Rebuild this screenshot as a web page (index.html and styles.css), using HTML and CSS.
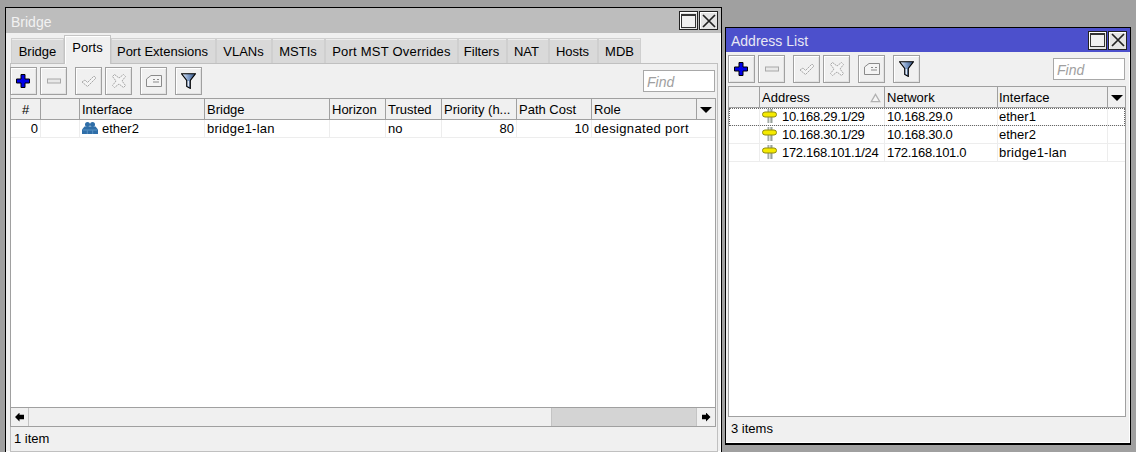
FILE: index.html
```html
<!DOCTYPE html>
<html lang="en">
<head>
<meta charset="utf-8">
<title>Bridge and Address List</title>
<link rel="stylesheet" href="styles.css">
</head>
<body>
<svg class="sprite" aria-hidden="true">
  <symbol id="i-plus" viewBox="0 0 14 14"><path d="M5 .5h4v4.500h4.500v4H9v4.500H5V9H.5V5H5z" fill="#0000e6" stroke="#000" stroke-width="1"/></symbol>
  <symbol id="i-minus" viewBox="0 0 16 16"><rect x="1.500" y="6" width="13" height="4" fill="#e8e8e8" stroke="#a8a8a8"/></symbol>
  <symbol id="i-check" viewBox="0 0 16 16"><path d="M1 9l3-2 2.500 2.500L13 3l2 2-8.500 8.500z" fill="#f4f4f4" stroke="#a8a8a8" stroke-dasharray="2 .6"/></symbol>
  <symbol id="i-x" viewBox="0 0 16 16"><path d="M3.500 1.500L8 5l4.500-3.500 2 2L11 8l3.500 4.500-2 2L8 11l-4.500 3.500-2-2L5 8 1.500 3.500z" fill="#f4f4f4" stroke="#a8a8a8" stroke-dasharray="2 .6"/></symbol>
  <symbol id="i-note" viewBox="0 0 16 16"><path d="M.5 6L5 2.500h10.500v11H.5z" fill="#f4f4f4" stroke="#8a8a8a"/><path d="M7 6.500h2M11 6.500h2M7 9h6" stroke="#8a8a8a"/></symbol>
  <symbol id="i-filter" viewBox="0 0 15 16"><defs><linearGradient id="g-f" x1="0" x2="1" y1="0" y2="0"><stop offset="0" stop-color="#e8eef8"/><stop offset=".5" stop-color="#7e9cc8"/><stop offset="1" stop-color="#33517f"/></linearGradient></defs><path d="M.6 .8h13.800L9.300 7.500V15.400L5.700 13.500V7.500z" fill="url(#g-f)" stroke="#000" stroke-width="1.100"/><path d="M6.800 8v5l1 .6V8z" fill="#fff"/></symbol>
  <symbol id="i-if" viewBox="0 0 16 12"><g fill="#2f6ea8"><circle cx="5.500" cy="2.600" r="2.500"/><circle cx="10.500" cy="2.600" r="2.500"/><path d="M2.500 4.500h11l2.500 3v4.500H0V7.500z"/></g><path d="M1 8h14M5.300 8.500v3.500M10.700 8.500v3.500" stroke="#6fa3d0" stroke-width=".7"/></symbol>
  <symbol id="i-addr" viewBox="0 0 15 14"><rect x="5.500" y="0" width="5" height="14" fill="#98a29b"/><rect x="6.800" y="0" width="1.700" height="14" fill="#dde0dd"/><rect x=".5" y="3" width="14" height="5" rx="2.500" fill="#f5ea00" stroke="#8f8a10"/></symbol>
</svg>

<section class="window win-bridge">
  <header class="titlebar inactive">
    <span class="title">Bridge</span>
    <span class="winbtns">
      <span class="winbtn"><span class="maxi"></span></span>
      <span class="winbtn"><svg class="closei" viewBox="0 0 14 14"><path d="M1 1l12 12M13 1L1 13" stroke="#222" stroke-width="1.700"/></svg></span>
    </span>
  </header>
  <nav class="tabs">
    <span class="tab t1">Bridge</span>
    <span class="tab active t2">Ports</span>
    <span class="tab t3">Port Extensions</span>
    <span class="tab t4">VLANs</span>
    <span class="tab t5">MSTIs</span>
    <span class="tab t6">Port MST Overrides</span>
    <span class="tab t7">Filters</span>
    <span class="tab t8">NAT</span>
    <span class="tab t9">Hosts</span>
    <span class="tab t10">MDB</span>
  </nav>
  <div class="panel panel-bridge">
    <div class="toolbar">
      <span class="tbtn"><svg class="ic-plus"><use href="#i-plus"/></svg></span>
      <span class="tbtn"><svg class="ic16"><use href="#i-minus"/></svg></span>
      <span class="tbtn gap"><svg class="ic16"><use href="#i-check"/></svg></span>
      <span class="tbtn"><svg class="ic16"><use href="#i-x"/></svg></span>
      <span class="tbtn gap"><svg class="ic16"><use href="#i-note"/></svg></span>
      <span class="tbtn gap"><svg class="ic-f"><use href="#i-filter"/></svg></span>
      <span class="find">Find</span>
    </div>
    <div class="table">
      <div class="row head cols-bridge">
        <span class="c ctr">#</span><span class="c"></span><span class="c">Interface</span><span class="c">Bridge</span><span class="c">Horizon</span><span class="c">Trusted</span><span class="c">Priority (h...</span><span class="c">Path Cost</span><span class="c">Role</span><span class="c arrow"><i class="down"></i></span>
      </div>
      <div class="row cols-bridge">
        <span class="c num">0</span><span class="c"></span><span class="c icon-cell"><svg class="ic-if"><use href="#i-if"/></svg>ether2</span><span class="c wider">bridge1-lan</span><span class="c"></span><span class="c">no</span><span class="c num">80</span><span class="c num">10</span><span class="c wide">designated port</span>
      </div>
    </div>
    <div class="hscroll">
      <span class="sbtn"><i class="al"></i></span>
      <span class="strack"></span>
      <span class="sthumb"></span>
      <span class="sbtn"><i class="ar"></i></span>
    </div>
    <div class="status">1 item</div>
  </div>
</section>

<section class="window win-addr">
  <header class="titlebar">
    <span class="title">Address List</span>
    <span class="winbtns">
      <span class="winbtn"><span class="maxi"></span></span>
      <span class="winbtn"><svg class="closei" viewBox="0 0 14 14"><path d="M1 1l12 12M13 1L1 13" stroke="#222" stroke-width="1.700"/></svg></span>
    </span>
  </header>
  <div class="panel panel-addr">
    <div class="toolbar">
      <span class="tbtn"><svg class="ic-plus"><use href="#i-plus"/></svg></span>
      <span class="tbtn"><svg class="ic16"><use href="#i-minus"/></svg></span>
      <span class="tbtn gap"><svg class="ic16"><use href="#i-check"/></svg></span>
      <span class="tbtn"><svg class="ic16"><use href="#i-x"/></svg></span>
      <span class="tbtn gap"><svg class="ic16"><use href="#i-note"/></svg></span>
      <span class="tbtn gap"><svg class="ic-f"><use href="#i-filter"/></svg></span>
      <span class="find">Find</span>
    </div>
    <div class="table">
      <div class="row head cols-addr">
        <span class="c"></span><span class="c sorted">Address<svg class="sort" viewBox="0 0 9 8"><path d="M4.500 1L8 7H1z" fill="#f4f4f4" stroke="#b0b0b0"/></svg></span><span class="c">Network</span><span class="c">Interface</span><span class="c arrow"><i class="down"></i></span>
      </div>
      <div class="row cols-addr selected">
        <span class="c"></span><span class="c icon-cell ip"><svg class="ic-addr"><use href="#i-addr"/></svg>10.168.29.1/29</span><span class="c ip">10.168.29.0</span><span class="c">ether1</span><span class="c"></span>
      </div>
      <div class="row cols-addr">
        <span class="c"></span><span class="c icon-cell ip"><svg class="ic-addr"><use href="#i-addr"/></svg>10.168.30.1/29</span><span class="c ip">10.168.30.0</span><span class="c">ether2</span><span class="c"></span>
      </div>
      <div class="row cols-addr">
        <span class="c"></span><span class="c icon-cell ip"><svg class="ic-addr"><use href="#i-addr"/></svg>172.168.101.1/24</span><span class="c ip">172.168.101.0</span><span class="c wider">bridge1-lan</span><span class="c"></span>
      </div>
    </div>
    <div class="status status-addr">3 items</div>
  </div>
</section>
</body>
</html>
```
FILE: styles.css
```css
* { box-sizing: border-box; }
html, body { margin: 0; height: 100%; }
body {
  position: relative;
  width: 1136px;
  height: 452px;
  overflow: hidden;
  background: #a0a0a0;
  font: 13px/1 "Liberation Sans", Arial, sans-serif;
  color: #000;
}
.sprite { position: absolute; width: 0; height: 0; }

.window {
  position: absolute;
  display: flex;
  flex-direction: column;
  background: #f0f0f0;
  border: 1px solid #000;
  box-shadow: inset -1px -1px 0 #fff;
}
.win-bridge { left: 5px; top: 7px; width: 717px; height: 446px; }
.win-addr { left: 725px; top: 27px; width: 406px; height: 418px; border-bottom-width: 2px; }

.titlebar {
  flex: none;
  display: flex;
  align-items: center;
  justify-content: space-between;
  height: 24px;
  padding: 0 3px 0 5px;
  background: #4c50cc;
  color: #e8e8f4;
  font-size: 14px;
}
.titlebar.inactive { height: 25px; background: #bdbdbd; color: #f2f2f2; }
.title { padding-top: 2px; }
.winbtns { display: flex; gap: 1px; }
.winbtn {
  display: flex;
  align-items: center;
  justify-content: center;
  width: 19px;
  height: 19px;
  background: #e4e4e4;
  border: 1px solid #222;
  box-shadow: inset 1px 1px 0 #fff;
}
.maxi { width: 15px; height: 14px; border: 1px solid #333; border-top-width: 2px; background: #f0f0f0; }
.closei { width: 14px; height: 14px; }

.tabs { flex: none; display: flex; height: 30px; padding-left: 5px; align-items: flex-end; }
.tab {
  display: flex;
  align-items: center;
  justify-content: center;
  height: 25px;
  padding-top: 1px;
  background: #d9d9d9;
  border: 1px solid #cfcfcf;
  border-bottom: 0;
  box-shadow: inset 0 1px 0 #ececec;
}
.tab.active {
  position: relative;
  height: 29px;
  margin-bottom: -1px;
  padding-bottom: 6px;
  background: #f0f0f0;
  border-color: #c4c4c4;
  box-shadow: inset 1px 1px 0 #fff;
  z-index: 1;
}
.t1 { width: 53px; }
.t2 { width: 47px; }
.t3 { width: 105px; padding-right: 2px; }
.t4 { width: 56px; padding-right: 1px; }
.t5 { width: 53px; padding-right: 1px; }
.t6 { width: 133px; letter-spacing: .22px; }
.t7 { width: 49px; padding-right: 2px; }
.t8 { width: 42px; padding-right: 3px; }
.t9 { width: 49px; padding-right: 2px; }
.t10 { width: 43px; }

.panel { display: flex; flex-direction: column; flex: 1; min-height: 0; }
.panel-bridge {
  margin: 0 3px 0 4px;
  padding: 3px 2px 0 0;
  border-top: 1px solid #c0c0c0;
  border-bottom: 1px solid #c0c0c0;
  box-shadow: inset 1px 0 0 #c0c0c0, inset -1px 0 0 #c0c0c0;
}
.panel-addr { padding: 3px 4px 3px 2px; }

.toolbar { flex: none; display: flex; align-items: center; height: 28px; padding-right: 1px; }
.tbtn {
  display: flex;
  align-items: center;
  justify-content: center;
  width: 27px;
  height: 28px;
  margin-right: 3px;
  background: #f0f0f0;
  border: 1px solid #a0a0a0;
  box-shadow: inset 1px 1px 0 #fff, inset -1px -1px 0 #e2e2e2;
}
.gap { margin-left: 5px; }
.ic16 { width: 16px; height: 16px; }
.ic-plus { width: 14px; height: 14px; margin-right: 1px; }
.ic-f { width: 15px; height: 16px; }
.find {
  margin-left: auto;
  display: flex;
  align-items: center;
  width: 72px;
  height: 22px;
  padding: 1px 0 0 3px;
  background: #fff;
  border: 1px solid #a8a8a8;
  color: #a0a0a0;
  font-size: 14px;
  font-style: italic;
}

.table {
  flex: 1;
  min-height: 0;
  margin-top: 3px;
  background: #fff;
  border: 1px solid #a0a0a0;
}
.panel-bridge .table { border-bottom: 0; }
.row { display: grid; height: 18px; border-bottom: 1px solid #ededed; }
.row.head { height: 21px; background: #f0f0f0; border-bottom: 1px solid #a0a0a0; }
.cols-bridge { grid-template-columns: 30px 39px 125px 125px 56px 56px 75px 75px 105px 18px; }
.cols-addr { grid-template-columns: 31px 125px 113px 110px 17px; }
.c {
  display: flex;
  align-items: center;
  padding: 0 2px;
  white-space: nowrap;
  overflow: hidden;
  border-right: 1px solid #ededed;
}
.cols-addr .c:nth-child(4) { padding-left: 1px; }
.head .c { border-right-color: #a0a0a0; padding-top: 1px; }
.head .c:last-child { border-right: 0; }
.row .c:last-child { border-right: 0; }
.ctr { justify-content: center; }
.num { justify-content: flex-end; }
.wide { letter-spacing: .35px; }
.wider { letter-spacing: .25px; }
.ip { letter-spacing: -.3px; }
.arrow { justify-content: center; padding: 0; }
.down {
  display: block;
  width: 0;
  height: 0;
  border-left: 6px solid transparent;
  border-right: 6px solid transparent;
  border-top: 6px solid #000;
}
.ic-if { flex: none; width: 16px; height: 12px; margin-right: 4px; margin-top: -1px; }
.ic-addr { flex: none; width: 15px; height: 14px; margin-right: 5px; margin-top: -1px; }
.sorted { justify-content: space-between; }
.sort { width: 11px; height: 10px; margin-right: 1px; }
.selected { outline: 1px dotted #666; outline-offset: -1px; }

.hscroll { flex: none; display: flex; height: 20px; border: 1px solid #a0a0a0; }
.sbtn {
  flex: none;
  display: flex;
  align-items: center;
  justify-content: center;
  width: 18px;
  background: #f0f0f0;
  border-right: 1px solid #c4c4c4;
}
.sbtn:last-child { border-right: 0; border-left: 1px solid #c4c4c4; width: 19px; }
.strack { flex: 1; background: #f0f0f0; border-right: 1px solid #c4c4c4; }
.sthumb { flex: none; width: 144px; background: #d4d4d4; }
.al, .ar { display: block; width: 9px; height: 9px; background: #000; }
.al { clip-path: polygon(0 50%, 50% 0, 50% 25%, 100% 25%, 100% 75%, 50% 75%, 50% 100%); }
.ar { clip-path: polygon(100% 50%, 50% 0, 50% 25%, 0 25%, 0 75%, 50% 75%, 50% 100%); }

.status { flex: none; height: 24px; display: flex; align-items: center; padding-left: 4px; padding-bottom: 2px; }
.status-addr { height: 23px; padding-left: 3px; padding-bottom: 0; }
```
